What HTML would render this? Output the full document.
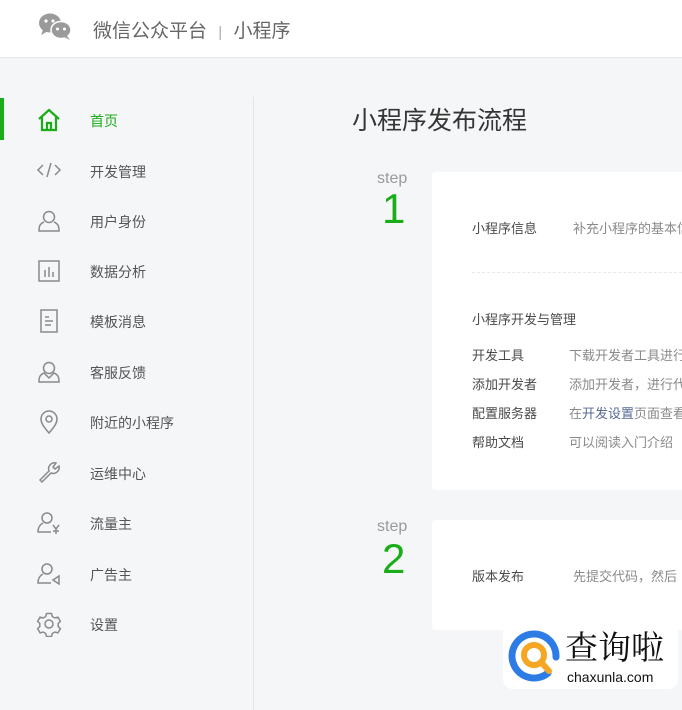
<!DOCTYPE html>
<html><head><meta charset="utf-8"><style>
*{margin:0;padding:0;box-sizing:border-box}
body{width:682px;height:710px;overflow:hidden;background:#f5f6f8;font-family:"Liberation Sans","Noto Sans CJK SC",sans-serif;position:relative;color:#353535}
.hdr{position:absolute;left:0;top:0;width:682px;height:58px;background:#fff;border-bottom:1px solid #e6e7e9}
.abs{position:absolute;white-space:nowrap}
.nav{position:absolute;left:90px;font-size:14px;color:#555}
.ic{position:absolute;left:36px;width:26px;height:26px}
.card{position:absolute;left:432px;width:260px;background:#fff;border-radius:3px}
.t{font-size:13px;color:#4a4a4a}
.g{font-size:13px;color:#8a8a8a}
</style></head><body>
<div class="hdr">
<svg class="abs" style="left:38px;top:12px" width="36" height="30" viewBox="0 0 36 30">
<ellipse cx="12" cy="11" rx="11" ry="9.5" fill="#9a9a9a"/><path d="M5 18 L3 23 L10 19Z" fill="#9a9a9a"/>
<ellipse cx="23" cy="18" rx="10" ry="8.5" fill="#9a9a9a" stroke="#fff" stroke-width="1.5"/><path d="M29 24 L32 28 L26 25Z" fill="#9a9a9a"/>
<circle cx="8" cy="9" r="1.6" fill="#fff"/><circle cx="15" cy="9" r="1.6" fill="#fff"/><circle cx="19.5" cy="17" r="1.5" fill="#fff"/><circle cx="26.5" cy="17" r="1.5" fill="#fff"/></svg>
<div class="abs" style="left:93px;top:16px;font-size:19px;color:#666">微信公众平台 <span style="color:#aaa;margin:0 6px;font-size:15px">|</span> 小程序</div>
</div>
<div class="abs" style="left:0;top:98px;width:4px;height:42px;background:#1aad19"></div>
<div class="abs" style="left:253px;top:97px;width:1px;height:613px;background:#e4e5e7"></div>

<svg class="ic" style="top:107px" viewBox="0 0 26 26" fill="none" stroke="#1aad19" stroke-width="2.2"><path d="M3 12 L13 3 L23 12"/><path d="M6 10 V23 H20 V10"/><path d="M11 23 V16 H15 V23"/></svg>
<div class="nav" style="top:111px;color:#1aad19">首页</div>

<svg class="ic" style="top:157px" viewBox="0 0 26 26" fill="none" stroke="#8a8a8a" stroke-width="1.5"><path d="M7 8 L2 13 L7 18"/><path d="M19 8 L24 13 L19 18"/><path d="M15 6 L11 20"/></svg>
<div class="nav" style="top:162px">开发管理</div>

<svg class="ic" style="top:208px" viewBox="0 0 26 26" fill="none" stroke="#8a8a8a" stroke-width="1.5"><circle cx="13" cy="9" r="5.5"/><path d="M8 14 C3 16 3 20 3 23 H23 C23 20 23 16 18 14"/></svg>
<div class="nav" style="top:212px">用户身份</div>

<svg class="ic" style="top:258px" viewBox="0 0 26 26" fill="none" stroke="#8a8a8a" stroke-width="1.5"><rect x="3" y="3" width="20" height="20"/><path d="M9 19V12M13 19V9M17 19V14"/></svg>
<div class="nav" style="top:262px">数据分析</div>

<svg class="ic" style="top:308px" viewBox="0 0 26 26" fill="none" stroke="#8a8a8a" stroke-width="1.5"><rect x="5" y="2" width="16" height="22"/><path d="M9 9H13M9 13H17M9 17H15"/></svg>
<div class="nav" style="top:312px">模板消息</div>

<svg class="ic" style="top:359px" viewBox="0 0 26 26" fill="none" stroke="#8a8a8a" stroke-width="1.5"><circle cx="13" cy="9" r="5.5"/><path d="M8 14 C3 16 3 20 3 23 H23 C23 20 23 16 18 14 L13 19Z"/></svg>
<div class="nav" style="top:363px">客服反馈</div>

<svg class="ic" style="top:409px" viewBox="0 0 26 26" fill="none" stroke="#8a8a8a" stroke-width="1.5"><path d="M13 24 C7 17 5 14 5 10 A8 8 0 0 1 21 10 C21 14 19 17 13 24Z"/><circle cx="13" cy="10" r="3"/></svg>
<div class="nav" style="top:413px">附近的小程序</div>

<svg class="ic" style="top:460px" viewBox="0 0 26 26" fill="none" stroke="#8a8a8a" stroke-width="1.5"><path d="M4 20 L13 11 A6 6 0 0 1 20 3 L17 7 L19 9 L23 6 A6 6 0 0 1 15 13 L6 22Z"/></svg>
<div class="nav" style="top:464px">运维中心</div>

<svg class="ic" style="top:510px" viewBox="0 0 26 26" fill="none" stroke="#8a8a8a" stroke-width="1.5"><circle cx="11" cy="8" r="5"/><path d="M7 13 C3 15 2 19 2 22 H15"/><path d="M17 15 L20 19 L23 15M20 19V24M17 21H23"/></svg>
<div class="nav" style="top:514px">流量主</div>

<svg class="ic" style="top:561px" viewBox="0 0 26 26" fill="none" stroke="#8a8a8a" stroke-width="1.5"><circle cx="11" cy="8" r="5"/><path d="M7 13 C3 15 2 19 2 22 H15"/><path d="M23 15 L17 19 L23 23Z"/></svg>
<div class="nav" style="top:565px">广告主</div>

<svg class="ic" style="top:611px" viewBox="0 0 26 26" fill="none" stroke="#8a8a8a" stroke-width="1.5"><path d="M10.5 2.5h5l.8 3 2.6 1.5 3-.9 2.5 4.3-2.2 2.1v3l2.2 2.1-2.5 4.3-3-.9-2.6 1.5-.8 3h-5l-.8-3-2.6-1.5-3 .9-2.5-4.3 2.2-2.1v-3L1.6 10.4l2.5-4.3 3 .9 2.6-1.5z"/><circle cx="13" cy="13" r="4"/></svg>
<div class="nav" style="top:615px">设置</div>

<div class="abs" style="left:352px;top:101px;font-size:25px;color:#353535">小程序发布流程</div>

<div class="abs" style="left:377px;top:170px;font-size:16px;color:#9a9a9a">step</div>
<div class="abs" style="left:382px;top:188px;font-size:42px;color:#1aad19;line-height:1">1</div>
<div class="abs" style="left:377px;top:518px;font-size:16px;color:#9a9a9a">step</div>
<div class="abs" style="left:382px;top:538px;font-size:42px;color:#1aad19;line-height:1">2</div>

<div class="card" style="top:172px;height:318px"></div>
<div class="abs t" style="left:472px;top:218px">小程序信息</div>
<div class="abs g" style="left:573px;top:218px">补充小程序的基本信息</div>
<div class="abs" style="left:472px;top:272px;width:220px;border-top:1px dashed #e8e8e8"></div>
<div class="abs t" style="left:472px;top:309px">小程序开发与管理</div>
<div class="abs t" style="left:472px;top:345px">开发工具</div><div class="abs g" style="left:569px;top:345px">下载开发者工具进行</div>
<div class="abs t" style="left:472px;top:374px">添加开发者</div><div class="abs g" style="left:569px;top:374px">添加开发者，进行代</div>
<div class="abs t" style="left:472px;top:403px">配置服务器</div><div class="abs g" style="left:569px;top:403px">在<span style="color:#576b95">开发设置</span>页面查看</div>
<div class="abs t" style="left:472px;top:432px">帮助文档</div><div class="abs g" style="left:569px;top:432px">可以阅读入门介绍</div>

<div class="card" style="top:520px;height:110px"></div>
<div class="abs t" style="left:472px;top:566px">版本发布</div>
<div class="abs g" style="left:573px;top:566px">先提交代码，然后</div>

<div class="abs" style="left:503px;top:623px;width:175px;height:66px;background:#fff;border-radius:10px"></div>
<svg class="abs" style="left:508px;top:627px" width="56" height="56" viewBox="0 0 56 56"><path d="M40 46 A22 22 0 1 1 48 30" fill="none" stroke="#2d7be5" stroke-width="7" stroke-linecap="round"/><circle cx="26" cy="28" r="10" fill="none" stroke="#f5a623" stroke-width="6"/><path d="M33 35 L41 44" stroke="#f5a623" stroke-width="6" stroke-linecap="round"/></svg>
<div class="abs" style="left:565px;top:628px;font-size:33px;color:#111;font-family:'Noto Serif CJK SC',serif;line-height:1.1">查询啦</div>
<div class="abs" style="left:567px;top:669px;font-size:14px;color:#111">chaxunla.com</div>
</body></html>
